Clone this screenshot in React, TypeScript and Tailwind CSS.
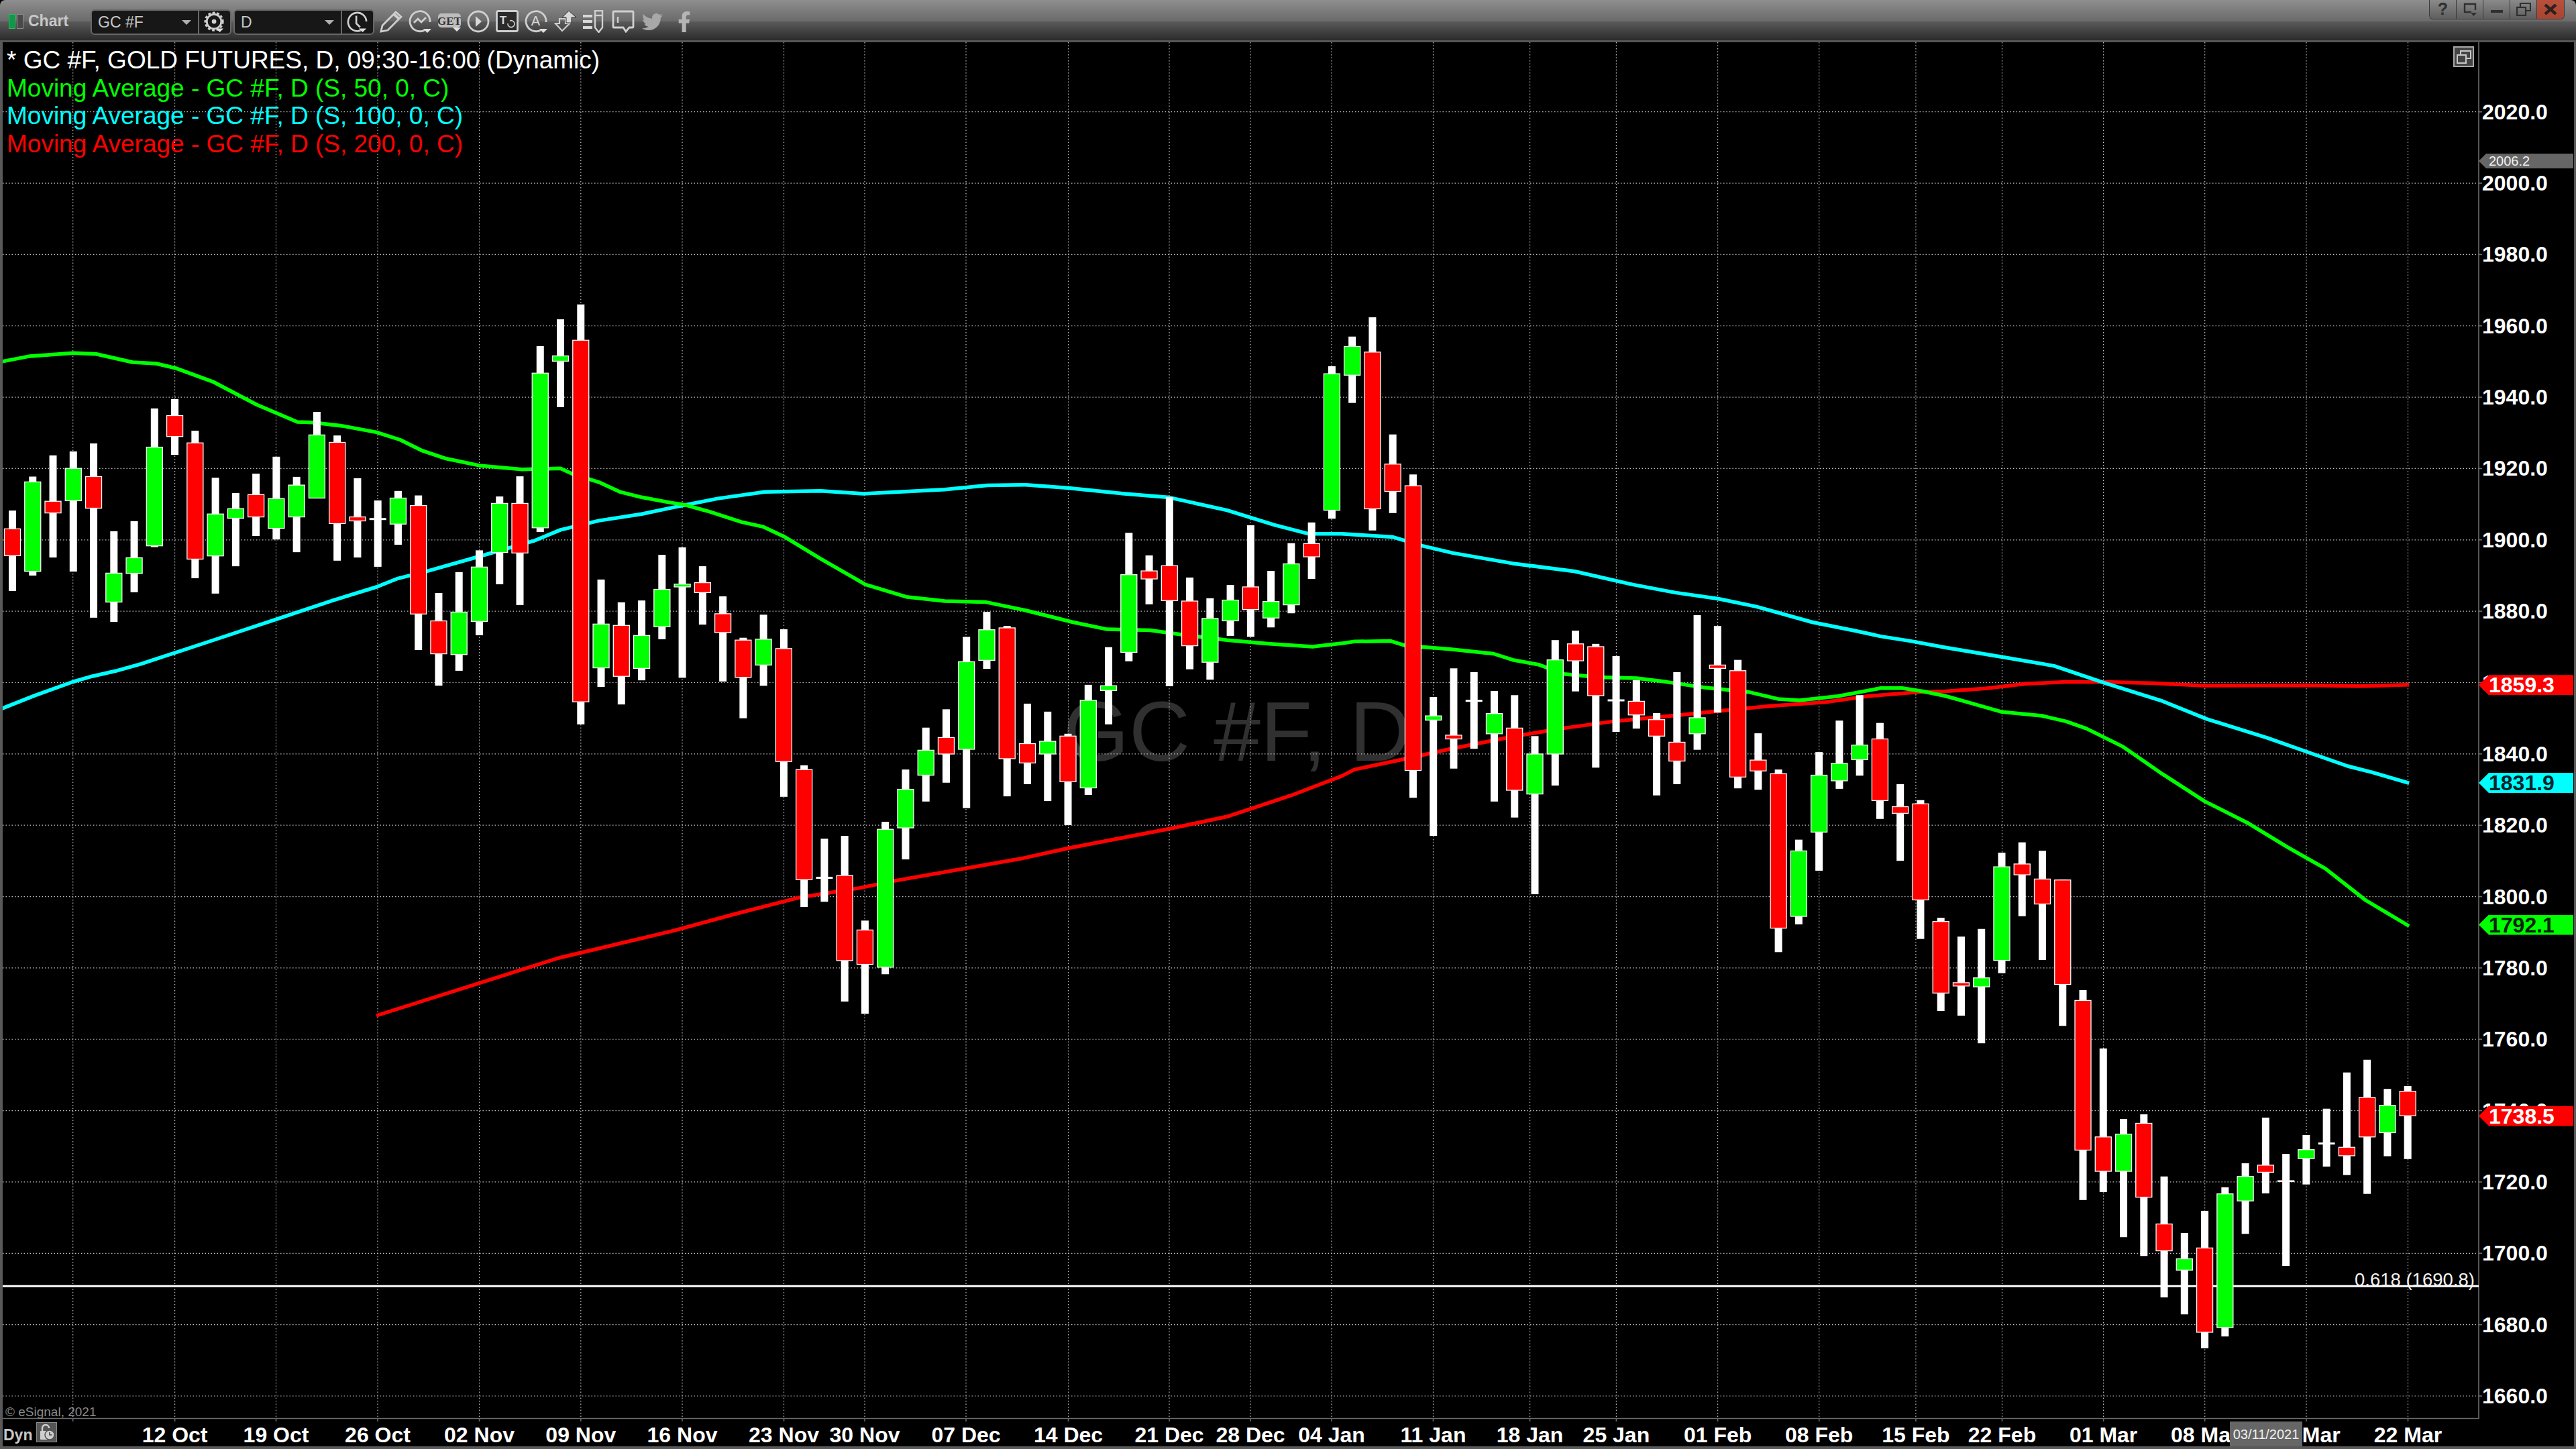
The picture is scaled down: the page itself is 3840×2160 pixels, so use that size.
import React from 'react';
import { FaTwitter, FaFacebookF } from 'react-icons/fa';

type Candle = [number, number, number, number, 'r' | 'g' | 'd'];

// plot scale: 5.3175px per point, 2020 sits at y=166.7
const priceY = (p: number) => 166.7 + (2020 - p) * 5.3175;
const candleX = (i: number) => 18.5 + 30.26 * i;

// y values were traced per chart section, sy is the scale of that trace
const trace = (rows: Candle[], sy: number, y0 = 440): Candle[] =>
  rows.map(([hi, lo, t, b, c]) => [y0 + hi / sy, y0 + lo / sy, y0 + t / sy, y0 + b / sy, c]);

const CANDLES: Candle[] = [
  ...trace([
    [812, 1115, 881, 982, 'r'], [684, 1057, 704, 1041, 'g'], [604, 989, 777, 821, 'r'], [589, 1042, 653, 775, 'g'],
    [559, 1216, 684, 803, 'r'], [890, 1232, 1048, 1157, 'g'], [852, 1120, 990, 1049, 'g'], [427, 950, 573, 945, 'g'],
    [392, 602, 454, 533, 'r'], [511, 1067, 557, 995, 'r'], [688, 1125, 825, 983, 'g'], [746, 1022, 805, 841, 'g'],
    [673, 908, 752, 836, 'r'], [609, 921, 767, 879, 'g'], [685, 969, 716, 836, 'g'], [440, 765, 527, 765, 'g'],
    [529, 1001, 555, 861, 'r'], [690, 989, 836, 851, 'r'], [774, 1024, 844, 844, 'd'], [738, 941, 765, 863, 'g'],
    [755, 1338, 793, 1202, 'r'], [1123, 1472, 1228, 1352, 'r'], [1044, 1416, 1195, 1355, 'g'], [962, 1282, 1025, 1230, 'g'],
    [759, 1090, 785, 970, 'g'], [683, 1168, 785, 972, 'r'], [192, 893, 294, 877, 'g'], [91, 422, 229, 249, 'g'],
    [35, 1618, 170, 1533, 'r'], [1072, 1477, 1240, 1405, 'g'], [1158, 1543, 1245, 1437, 'r'], [1151, 1452, 1283, 1407, 'g'],
    [979, 1297, 1109, 1250, 'g'],
  ], 2.529),
  ...trace([
    [536, 813, 614, 620, 'g'], [576, 700, 611, 632, 'r'], [640, 821, 677, 717, 'r'], [728, 899, 733, 812, 'r'],
    [679, 830, 731, 786, 'g'], [710, 1066, 751, 991, 'r'], [999, 1300, 1008, 1242, 'r'], [1155, 1289, 1238, 1238, 'd'],
    [1149, 1501, 1233, 1414, 'r'], [1329, 1527, 1349, 1422, 'r'], [1119, 1443, 1135, 1428, 'g'], [1008, 1199, 1050, 1132, 'g'],
    [919, 1076, 967, 1020, 'g'], [880, 1036, 940, 975, 'r'], [726, 1090, 779, 965, 'g'], [673, 794, 711, 776, 'g'],
    [703, 1065, 707, 985, 'r'], [868, 1039, 953, 994, 'r'], [885, 1075, 948, 975, 'g'], [932, 1126, 937, 1034, 'r'],
    [828, 1062, 861, 1047, 'g'], [748, 912, 830, 840, 'g'], [505, 778, 594, 759, 'g'], [553, 657, 586, 603, 'r'],
    [429, 831, 575, 649, 'r'], [600, 795, 650, 745, 'r'], [644, 817, 687, 780, 'g'], [616, 724, 648, 692, 'g'],
    [489, 726, 620, 668, 'r'], [586, 706, 651, 686, 'g'], [527, 676, 571, 658, 'g'], [483, 603, 528, 556, 'r'],
    [151, 475, 167, 457, 'g'],
    [88, 229, 109, 170, 'g'], [47, 500, 121, 454, 'r'], [296, 463, 359, 417, 'r'], [381, 1068, 405, 1010, 'r'],
    [854, 1149, 894, 903, 'g'], [793, 1006, 935, 943, 'r'], [801, 964, 862, 862, 'd'], [841, 1076, 889, 932, 'g'],
    [850, 1110, 920, 1052, 'r'], [937, 1273, 975, 1060, 'g'], [733, 1042, 775, 975, 'g'], [713, 842, 741, 777, 'r'],
    [741, 1004, 747, 851, 'r'], [767, 928, 861, 861, 'd'], [818, 921, 863, 892, 'r'], [888, 1063, 902, 937, 'r'],
    [801, 1039, 950, 990, 'r'], [680, 966, 898, 932, 'g'], [703, 887, 786, 793, 'r'], [775, 1048, 798, 1024, 'r'],
    [931, 1051, 988, 1011, 'r'], [1008, 1396, 1017, 1345, 'r'], [1157, 1337, 1181, 1320, 'g'], [971, 1223, 1020, 1141, 'g'],
    [904, 1049, 995, 1032, 'g'], [850, 1021, 956, 987, 'g'], [909, 1113, 943, 1074, 'r'], [1039, 1202, 1087, 1101, 'r'],
    [1073, 1368, 1081, 1285, 'r'], [1323, 1521, 1331, 1483, 'r'], [1363, 1531, 1461, 1468, 'r'],
  ], 1.4255),
  ...trace([
    [691, 934, 795, 814, 'g'], [529, 785, 559, 758, 'g'], [507, 664, 553, 576, 'r'], [525, 757, 585, 638, 'r'],
    [586, 897, 587, 809, 'r'], [821, 1267, 843, 1161, 'r'], [945, 1250, 1133, 1206, 'r'], [1095, 1346, 1127, 1206, 'g'],
    [1085, 1386, 1104, 1261, 'r'], [1217, 1474, 1318, 1375, 'r'], [1337, 1510, 1392, 1416, 'g'], [1290, 1582, 1369, 1548, 'r'],
    [1240, 1557, 1254, 1538, 'g'], [1189, 1339, 1217, 1269, 'g'], [1092, 1253, 1193, 1208, 'r'], [1169, 1407, 1226, 1228, 'r'],
    [1129, 1234, 1160, 1179, 'g'], [1073, 1196, 1147, 1147, 'd'], [996, 1214, 1155, 1173, 'r'], [969, 1254, 1049, 1133, 'r'],
    [1031, 1174, 1066, 1124, 'g'], [1025, 1180, 1036, 1088, 'r'],
  ], 1.4255, 900),
];

const toPts = (rows: number[][], x0: number, y0: number, sx: number, sy: number) =>
  rows.map(([x, y]) => `${(x0 + x / sx).toFixed(1)},${(y0 + y / sy).toFixed(1)}`).join(' ');

const MA50 = [
  toPts([[5, 250], [70, 230], [172, 218], [225, 222], [310, 253], [365, 258], [410, 275], [500, 328], [600, 413], [695, 478], [730, 480], [800, 493], [880, 517], [935, 545], [985, 585], [1040, 615], [1120, 642], [1220, 657], [1310, 653], [1340, 675], [1400, 705], [1450, 742], [1500, 762]], 0, 440, 1.568, 2.529),
  toPts([[0, 441], [30, 445], [90, 460], [165, 482], [215, 492], [265, 513], [350, 560], [455, 615], [550, 641], [640, 650], [735, 652], [830, 670], [940, 695], [1020, 710], [1120, 712], [1200, 722], [1300, 733], [1400, 741], [1500, 747]], 1000, 440, 1.568, 1.4255),
  toPts([[0, 740], [30, 736], [115, 735], [150, 745], [250, 752], [355, 762], [400, 775], [460, 785], [520, 805], [600, 812], [690, 814], [760, 822], [850, 834], [950, 843], [1020, 858], [1070, 861], [1160, 852], [1260, 835], [1310, 835], [1360, 842]], 2000, 440, 1.568, 1.4255),
  toPts([[0, 196], [50, 208], [141, 230], [240, 238], [300, 250], [350, 265], [440, 303], [540, 362], [645, 420], [750, 465], [850, 517], [945, 563], [1045, 630], [1153, 685]], 2900, 900, 1.668, 1.4255),
].join(' ');

const MA100 = [
  toPts([[5, 1558], [80, 1510], [170, 1458], [215, 1437], [270, 1417], [330, 1390], [500, 1300], [640, 1225], [780, 1150], [880, 1100], [930, 1068], [1000, 1040], [1120, 985], [1250, 925], [1310, 885], [1400, 850], [1500, 825]], 0, 440, 1.568, 2.529),
  toPts([[0, 452], [110, 432], [220, 418], [350, 416], [450, 422], [640, 413], [740, 404], [830, 403], [930, 410], [1060, 422], [1165, 430], [1300, 457], [1410, 488], [1490, 507]], 1000, 440, 1.568, 1.4255),
  toPts([[0, 507], [120, 514], [190, 533], [260, 548], [400, 570], [545, 587], [680, 615], [780, 632], [880, 645], [970, 662], [1100, 695], [1200, 713], [1260, 725], [1330, 735]], 2000, 440, 1.568, 1.4255),
  toPts([[0, 93], [140, 113], [270, 132], [395, 168], [540, 207], [650, 245], [800, 285], [900, 315], [1000, 345], [1060, 358], [1153, 381]], 2900, 900, 1.668, 1.4255),
].join(' ');

const MA200 = [
  '561,1514 833,1428',
  toPts([[0, 1352], [150, 1315], [300, 1280], [440, 1260], [520, 1245], [820, 1197], [930, 1175], [1165, 1134], [1300, 1108], [1450, 1063]], 1000, 440, 1.568, 1.4255),
  toPts([[0, 1022], [30, 1008], [150, 985], [250, 965], [400, 938], [520, 920], [640, 905], [780, 893], [900, 882], [1000, 873], [1130, 865], [1230, 852], [1350, 843]], 2000, 440, 1.568, 1.4255),
  toPts([[0, 186], [100, 180], [200, 170], [300, 166], [395, 166], [520, 169], [640, 174], [900, 173], [1030, 175], [1153, 172]], 2900, 900, 1.668, 1.4255),
].join(' ');

const DATES: [string, number][] = [
  ['12 Oct', 260.6], ['19 Oct', 411.5], ['26 Oct', 563], ['02 Nov', 714.5], ['09 Nov', 865.8], ['16 Nov', 1017],
  ['23 Nov', 1168.5], ['30 Nov', 1289], ['07 Dec', 1440], ['14 Dec', 1592.5], ['21 Dec', 1743], ['28 Dec', 1864],
  ['04 Jan', 1985], ['11 Jan', 2136.5], ['18 Jan', 2280.6], ['25 Jan', 2409.4], ['01 Feb', 2560.6], ['08 Feb', 2711.7],
  ['15 Feb', 2855.9], ['22 Feb', 2984.5], ['01 Mar', 3135.6], ['08 Mar', 3286.7], ['15 Mar', 3438], ['22 Mar', 3589.5],
];
const GRID_X = [108.7, ...DATES.map((d) => d[1])];
const PRICES = Array.from({ length: 19 }, (_, i) => 2020 - i * 20);

const LEGEND = [
  { text: '* GC #F, GOLD FUTURES, D, 09:30-16:00 (Dynamic)', cls: 'text-white' },
  { text: 'Moving Average - GC #F, D (S, 50, 0, C)', cls: 'text-[#00ff00]' },
  { text: 'Moving Average - GC #F, D (S, 100, 0, C)', cls: 'text-[#00ffff]' },
  { text: 'Moving Average - GC #F, D (S, 200, 0, C)', cls: 'text-[#ff0000]' },
];

const TAGS = [
  { text: '1859.3', price: 1859.3, cls: 'bg-[#ff0000] text-white' },
  { text: '1831.9', price: 1831.9, cls: 'bg-[#00ffff] text-[#06222a]' },
  { text: '1792.1', price: 1792.1, cls: 'bg-[#00ff00] text-[#06220a]' },
  { text: '1738.5', price: 1738.5, cls: 'bg-[#ff0000] text-white' },
];

const Drop = ({ x = 22, y = 28 }: { x?: number; y?: number }) => (
  <path d={`M${x} ${y}h12l-6 6z`} fill="#e0e0e0" stroke="none" />
);

const ICON = { width: 34, height: 34, viewBox: '0 0 34 34', fill: 'none', stroke: '#cfcfcf', strokeWidth: 2.8 };

const ToolIcons = () => (
  <div className="flex gap-[9.3px] mt-[15px] ml-[8px] items-start">
    {/* pencil */}
    <svg {...ICON}>
      <path d="M2 32l2-9L24 3l8 7-20 20z" />
      <path d="M21 6l8 7" strokeWidth={4} />
    </svg>
    {/* indicators */}
    <svg {...ICON}>
      <path d="M24 30A15 15 0 1 1 32 18" />
      <path d="M8 19l6-6 5 5 7-7" />
      <Drop />
    </svg>
    {/* GET */}
    <svg {...ICON}>
      <rect x="0" y="5" width="34" height="21" rx="5" fill="#bdbdbd" stroke="none" />
      <text x="17" y="22" textAnchor="middle" fontFamily="Liberation Serif" fontWeight="bold" fontSize="17" fill="#333" stroke="none">GET</text>
      <Drop y={26} />
    </svg>
    {/* play */}
    <svg {...ICON}>
      <circle cx="17" cy="17" r="15" />
      <path d="M13 9l9 8-9 8z" fill="#d8d8d8" stroke="none" />
    </svg>
    {/* text tool */}
    <svg {...ICON}>
      <rect x="1.5" y="1.5" width="31" height="30" rx="2" fill="#2a2a2a" />
      <text x="11" y="21" textAnchor="middle" fontFamily="Liberation Sans" fontWeight="bold" fontSize="17" fill="#d8d8d8" stroke="none">T</text>
      <path d="M18 20a5 5 0 1 0 3-4" strokeWidth={1.6} />
    </svg>
    {/* annotation */}
    <svg {...ICON}>
      <path d="M24 30A15 15 0 1 1 32 18" />
      <text x="16.5" y="23" textAnchor="middle" fontFamily="Liberation Sans" fontSize="20" fill="#d8d8d8" stroke="none">A</text>
      <Drop />
    </svg>
    {/* swap arrows */}
    <svg {...ICON} strokeWidth={2.2}>
      <path d="M2 20h6v-7h9v7h6L12 31z" />
      <path d="M12 11h6V19h8v-8h7L22 1z" fill="#d8d8d8" stroke="#2a2a2a" strokeWidth={1} />
    </svg>
    {/* list with pencil */}
    <svg {...ICON} stroke="none">
      <path d="M0 7h14v4H0zM0 15h14v4H0zM0 24h14v4H0z" fill="#d8d8d8" />
      <path d="M18 1h11v25l-5.5 7-5.5-7z" fill="none" stroke="#cfcfcf" strokeWidth={2.4} />
      <path d="M18 8h11" stroke="#cfcfcf" strokeWidth={2.4} />
    </svg>
    {/* comment */}
    <svg {...ICON}>
      <path d="M3 2h28a1 1 0 0 1 1 1v22a1 1 0 0 1-1 1h-5l-5 6-4-6H3a1 1 0 0 1-1-1V3a1 1 0 0 1 1-1z" />
      <path d="M9 10v9" strokeWidth={2.4} />
    </svg>
    <div className="w-[34px] h-[34px] flex items-center justify-center text-[#a8a8a8] text-[31px]">
      <FaTwitter />
    </div>
    <div className="w-[34px] h-[34px] flex items-center justify-center pl-[8px] text-[#b5b5b5] text-[31px]">
      <FaFacebookF />
    </div>
  </div>
);

const Combo = ({ label, gear }: { label: string; gear?: boolean }) => (
  <div className="flex h-[38px] w-[210px] rounded-[6px] border-2 border-[#686868] bg-[#171717]">
    <div className="flex-1 flex items-center justify-between pl-[9px] pr-[10px] border-r-2 border-[#686868] text-[23px] text-[#c8c8c8]">
      <span>{label}</span>
      <svg width="14" height="7" viewBox="0 0 14 7"><path d="M0 0h14L7 7z" fill="#b0b0b0" /></svg>
    </div>
    <div className="w-[46px] flex items-center justify-center">
      {gear ? (
        <svg width="32" height="32" viewBox="0 0 34 34" fill="none" stroke="#cfcfcf">
          <circle cx="16" cy="16" r="11.5" strokeWidth="3" />
          <circle cx="16" cy="16" r="14" strokeWidth="3" strokeDasharray="4 3" />
          <circle cx="16" cy="16" r="3.6" fill="#cfcfcf" stroke="none" />
          <Drop x={19} y={27} />
        </svg>
      ) : (
        <svg width="32" height="32" viewBox="0 0 34 34" fill="none" stroke="#cfcfcf" strokeWidth="2.8">
          <path d="M22 30A14.5 14.5 0 1 1 31 16" />
          <path d="M15 7v12l6 6" />
          <Drop x={19} y={27} />
        </svg>
      )}
    </div>
  </div>
);

const WIN_BTN = 'w-[40px] h-[28px] flex items-center justify-center border-r border-[#3a3a3a] bg-[linear-gradient(#8a8a8a,#5e5e5e)]';

const WindowButtons = () => (
  <div className="ml-auto mr-[17px] flex rounded-b-[6px] overflow-hidden border border-t-0 border-[#3c3c3c] text-[#2f2f2f]">
    <div className={`${WIN_BTN} text-[25px] font-bold`}>?</div>
    <div className={WIN_BTN}>
      <svg width="20" height="20" viewBox="0 0 20 20" fill="none" stroke="#2f2f2f" strokeWidth="2.4">
        <path d="M12 14H2V2h16v9" />
        <path d="M11 15h9l-4.5 5z" fill="#2f2f2f" stroke="none" />
      </svg>
    </div>
    <div className={WIN_BTN}>
      <div className="w-[18px] h-[4px] mt-[6px] bg-[#2f2f2f]" />
    </div>
    <div className={WIN_BTN}>
      <svg width="22" height="20" viewBox="0 0 22 20" fill="none" stroke="#2f2f2f" strokeWidth="2.2">
        <rect x="1" y="7" width="13" height="12" />
        <path d="M6 6V1h15v11h-6" />
      </svg>
    </div>
    <div className="w-[40px] h-[28px] flex items-center justify-center bg-[linear-gradient(#b8503c,#a84432)]">
      <svg width="20" height="16" viewBox="0 0 20 16" stroke="#2f2020" strokeWidth="4.4"><path d="M2 1l16 14M18 1L2 15" /></svg>
    </div>
  </div>
);

const Header = () => (
  <header className="h-[63px] shrink-0 flex items-start rounded-t-[8px] bg-[linear-gradient(#8e8e8e_0,#6a6a6a_32px,#5a5a5a_32px,#2b2b2b_60px,#565656_60px)]">
    <div className="flex gap-[2px] mt-[21px] ml-[13px]">
      <div className="w-[10px] h-[22px] bg-[#0c9a45] border border-[#3ab06a]" />
      <div className="w-[10px] h-[22px] bg-[#4a4a4a] border border-[#8a8a8a]" />
    </div>
    <span className="mt-[17px] ml-[7px] w-[93px] text-[23px] leading-[28px] font-bold text-[#c8c8c8]">Chart</span>
    <div className="flex gap-[3px] mt-[14px]">
      <Combo label="GC #F" gear />
      <Combo label="D" />
    </div>
    <ToolIcons />
    <WindowButtons />
  </header>
);

const Chart = () => (
  <svg width="3833" height="2093" viewBox="4 63 3833 2093" className="relative block">
    {/* grid */}
    <g stroke="#c4c4c4" strokeWidth="1.2" strokeDasharray="1.5 3">
      {GRID_X.map((x) => <line key={x} x1={x} x2={x} y1="63" y2="2114" />)}
      {PRICES.map((p) => <line key={p} x1="4" x2="3695" y1={priceY(p)} y2={priceY(p)} />)}
    </g>
    {/* axes */}
    <g stroke="#6a6a6a" strokeWidth="1.6">
      <line x1="3695" x2="3695" y1="63" y2="2115" />
      <line x1="4" x2="3695" y1="2114.5" y2="2114.5" />
      {PRICES.map((p) => <line key={p} x1="3695" x2="3700" y1={priceY(p)} y2={priceY(p)} />)}
      {GRID_X.map((x) => <line key={x} x1={x} x2={x} y1="2114" y2="2119" />)}
    </g>
    <rect x="4" y={priceY(1690.8) - 1.5} width="3691" height="3" fill="#fff" />
    <g fill="none" strokeWidth="5.5" strokeLinejoin="round">
      <polyline points={MA200} stroke="#ff0000" />
      <polyline points={MA100} stroke="#00ffff" />
      <polyline points={MA50} stroke="#00ff00" />
    </g>
    {CANDLES.map(([hi, lo, top, bot, c], i) => {
      const x = candleX(i);
      return (
        <g key={i}>
          <rect x={x - 5.5} y={hi} width="11" height={lo - hi} fill="#fff" />
          {c === 'd' ? (
            <rect x={x - 12.5} y={top - 1.5} width="25" height="3" fill="#fff" />
          ) : (
            <rect
              x={x - 12}
              y={top}
              width="24"
              height={bot - top}
              fill={c === 'r' ? '#ff0000' : '#00ff00'}
              stroke="#fff"
              strokeWidth="1.3"
            />
          )}
        </g>
      );
    })}
  </svg>
);

export default function App() {
  return (
    <div className="w-[3840px] h-[2160px] flex flex-col overflow-hidden bg-black font-['Liberation_Sans',sans-serif]">
      <Header />
      <main className="relative flex-1 border-l-4 border-r-[3px] border-b-4 border-[#595959] bg-black">
        {/* symbol watermark sits behind the plot */}
        <div className="absolute left-[1581px] top-[958px] text-[126px] leading-[140px] whitespace-nowrap text-[#303030]">GC #F, D</div>
        <Chart />

        <div className="absolute left-[6px] top-[6px] flex flex-col text-[37px] leading-[41.7px] whitespace-nowrap">
          {LEGEND.map((l) => <div key={l.text} className={l.cls}>{l.text}</div>)}
        </div>

        <div className="absolute left-[3653px] top-[6px] w-[31px] h-[31px] flex items-center justify-center border-2 border-[#a8a8a8] bg-[#444]">
          <svg width="22" height="20" viewBox="0 0 22 20" fill="none" stroke="#c8c8c8" strokeWidth="2">
            <rect x="1" y="7" width="13" height="12" />
            <path d="M6 6V1h15v11h-6" />
          </svg>
        </div>

        <div className="absolute left-[3506px] top-[1829px] text-[27.5px] leading-[32px] whitespace-nowrap text-[#f2f2f2]">0.618 (1690.8)</div>
        <div className="absolute left-[4px] top-[2030px] text-[19px] leading-[24px] text-[#8a8a8a] whitespace-nowrap">© eSignal, 2021</div>

        {/* price axis */}
        {PRICES.map((p) => (
          <div
            key={p}
            className="absolute left-[3696px] -translate-y-1/2 text-[32px] leading-[36px] font-bold text-white"
            style={{ top: priceY(p) - 63 }}
          >
            {p.toFixed(1)}
          </div>
        ))}
        <div
          className="absolute left-[3691px] w-[141px] h-[22px] -translate-y-1/2 pl-[15px] bg-[#666] [clip-path:polygon(11px_0,100%_0,100%_100%,11px_100%,0_50%)] text-[20px] leading-[22px] text-[#f0f0f0]"
          style={{ top: priceY(2006.2) - 63 }}
        >
          2006.2
        </div>
        {TAGS.map((t) => (
          <div
            key={t.text}
            className={`absolute left-[3691px] w-[141px] h-[30px] -translate-y-1/2 pl-[15px] [clip-path:polygon(15px_0,100%_0,100%_100%,15px_100%,0_50%)] text-[32px] leading-[31px] font-bold ${t.cls}`}
            style={{ top: priceY(t.price) - 63 }}
          >
            {t.text}
          </div>
        ))}

        {/* date axis */}
        {DATES.map(([label, x]) => (
          <div
            key={label}
            className="absolute top-[2058px] -translate-x-1/2 text-[32px] leading-[36px] font-bold text-white whitespace-nowrap"
            style={{ left: x - 4 }}
          >
            {label}
          </div>
        ))}
        <div className="absolute left-[1px] top-[2063px] text-[23px] leading-[26px] font-bold text-[#c8c8c8]">Dyn</div>
        <div className="absolute left-[50px] top-[2057px] w-[31px] h-[30px] flex items-center justify-center border border-[#8a8a8a] bg-[#555]">
          <svg width="24" height="24" viewBox="0 0 24 24" fill="none">
            <path d="M5 11V6a5 5 0 0 1 10 0" stroke="#cfcfcf" strokeWidth="2.4" />
            <rect x="2" y="10" width="12" height="13" rx="1" fill="#cfcfcf" />
            <circle cx="16" cy="16" r="7" fill="#cfcfcf" stroke="#555" strokeWidth="1.5" />
            <path d="M16 12v4h3.5" stroke="#444" strokeWidth="1.6" />
          </svg>
        </div>
        <div className="absolute left-[3320px] top-[2056px] w-[108px] h-[37px] flex items-center justify-center bg-[#666] text-[20px] text-[#eee] whitespace-nowrap">
          03/11/2021
        </div>
      </main>
    </div>
  );
}
